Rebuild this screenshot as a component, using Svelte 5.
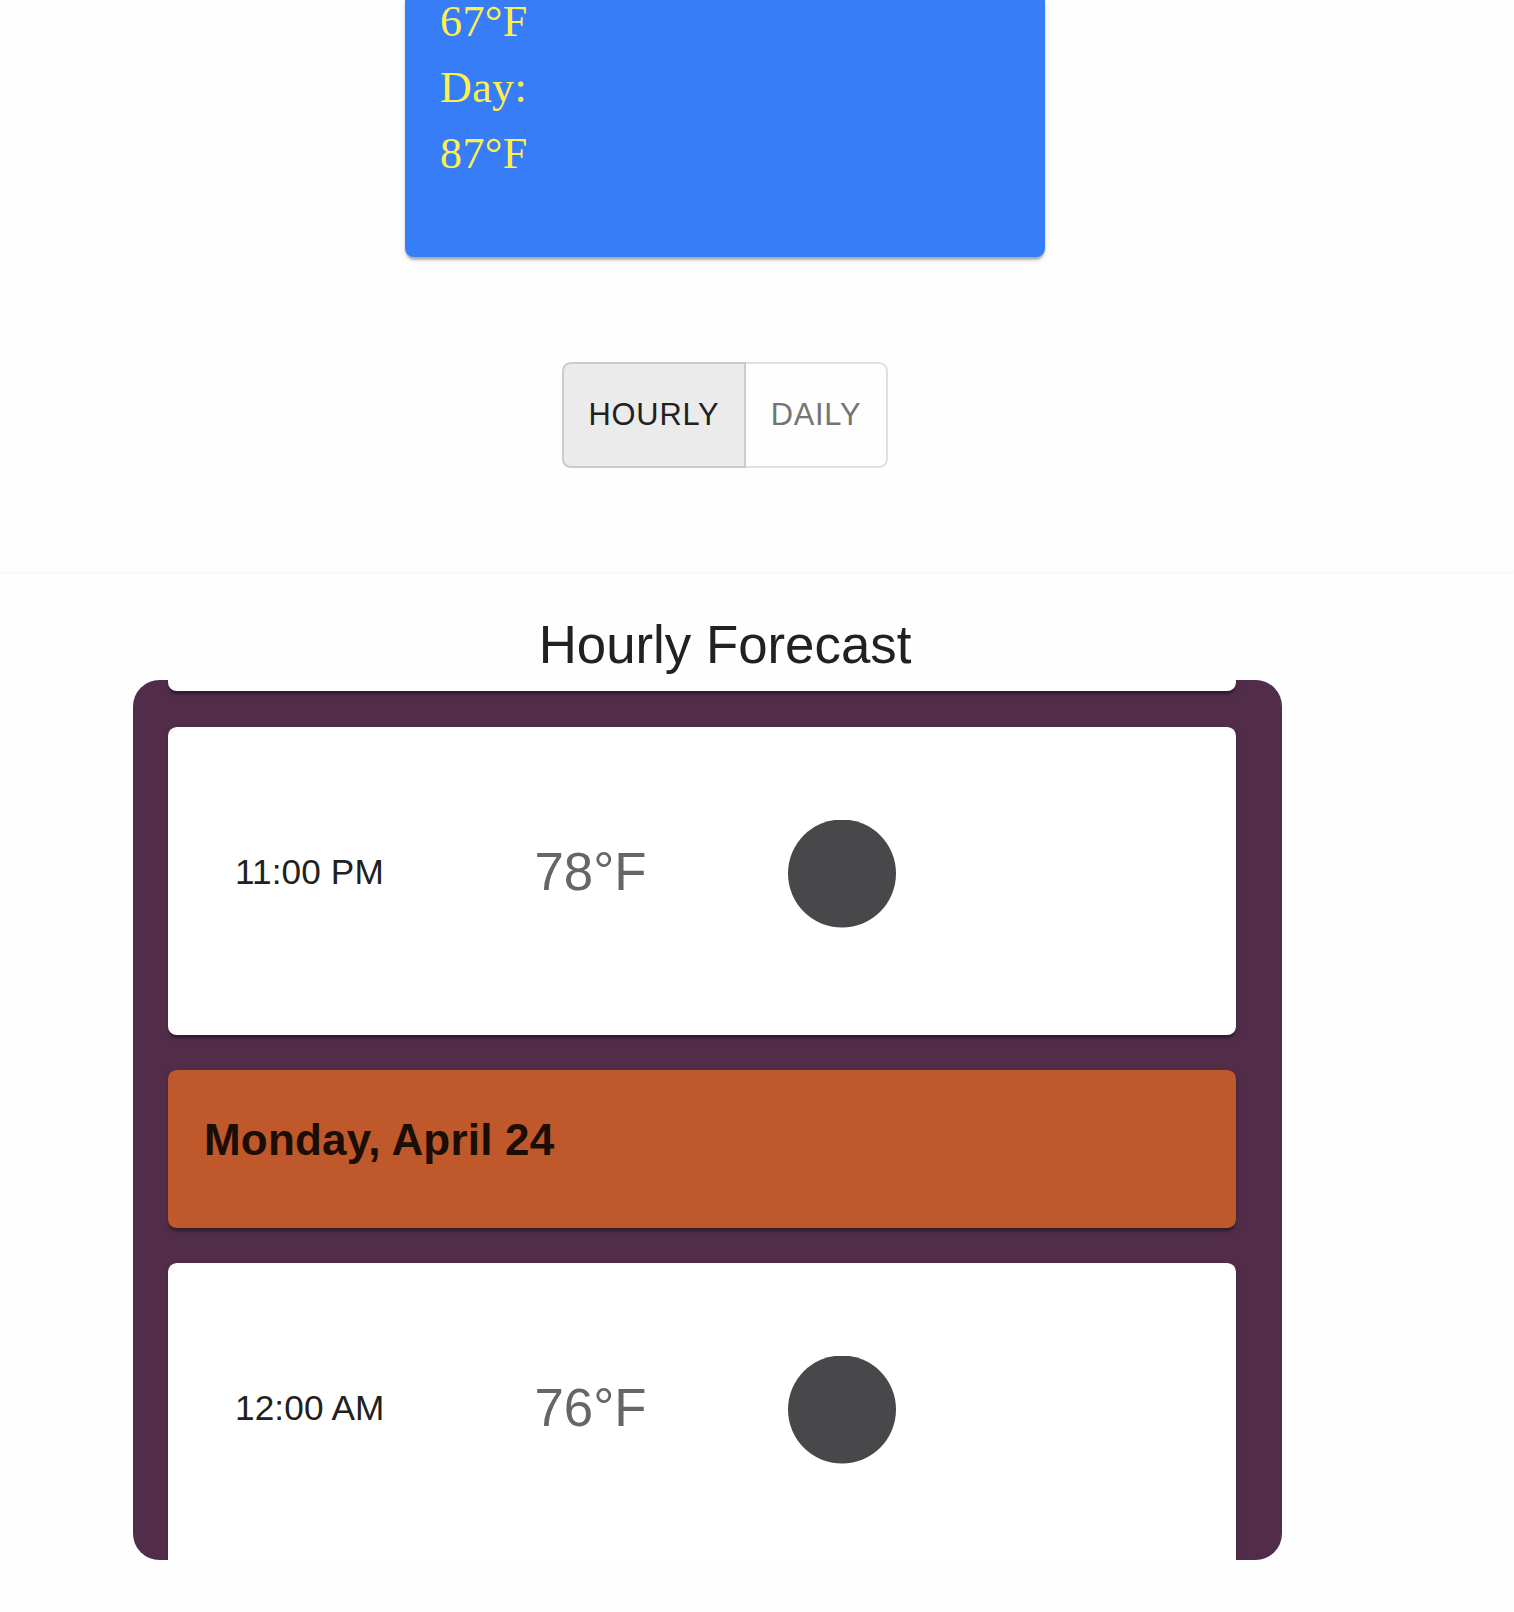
<script>
  const hours = [
    { time: '11:00 PM', temp: '78°F' },
    { time: '12:00 AM', temp: '76°F' }
  ];
</script>

{#snippet hourCard(hour)}
  <article class="card hour">
    <span class="time">{hour.time}</span>
    <span class="temp">{hour.temp}</span>
    <svg class="sky" viewBox="0 0 108 108" aria-hidden="true">
      <circle cx="54" cy="54" r="54" />
    </svg>
  </article>
{/snippet}

<main>
  <div class="column">
    <section class="current">
      <span>67°F</span>
      <span>Day:</span>
      <span>87°F</span>
    </section>
    <div class="toggle">
      <button class="selected">HOURLY</button>
      <button class="daily">DAILY</button>
    </div>
  </div>
  <hr />
  <div class="column">
    <h5>Hourly Forecast</h5>
    <section class="panel">
      <article class="card previous"></article>
      {@render hourCard(hours[0])}
      <article class="card date"><h6>Monday, April 24</h6></article>
      {@render hourCard(hours[1])}
    </section>
  </div>
</main>

<style>
  :global(body) {
    background: #fefefe;
  }
  main {
    height: 1612px;
    overflow: hidden;
    box-sizing: border-box;
    font-family: 'Liberation Sans', Arial, sans-serif;
    color: #212121;
  }
  .column {
    width: 1450px;
    display: flex;
    flex-direction: column;
    align-items: center;
  }
  .current {
    box-sizing: border-box;
    width: 640px;
    height: 257px;
    padding: 0 35px 70px;
    display: flex;
    flex-direction: column;
    justify-content: flex-end;
    border-radius: 0 0 8.8px 8.8px;
    background: #367df7;
    box-shadow: 0 4.4px 2.2px -2.2px rgba(0, 0, 0, 0.18), 0 2px 2.2px rgba(0, 0, 0, 0.12),
      0 2.2px 6.6px rgba(0, 0, 0, 0.1);
    font: 44px/66px 'Liberation Serif', 'Times New Roman', serif;
    letter-spacing: 0.41px;
    color: #fff04d;
  }
  .current span {
    flex: none;
  }
  .toggle {
    display: flex;
    box-sizing: border-box;
    height: 106px;
    margin-top: 105px;
  }
  button {
    box-sizing: border-box;
    margin: 0;
    padding: 0;
    font: 30.8px/54px 'Liberation Sans', Arial, sans-serif;
    letter-spacing: 0.8px;
    background: transparent;
    color: #757575;
    border: 2px solid #e0e0e0;
  }
  .selected {
    width: 184px;
    color: #212121;
    background: #ebebeb;
    border-color: #cbcbcb;
    border-right-width: 2px;
    border-radius: 8.8px 0 0 8.8px;
  }
  .daily {
    width: 142px;
    border-left: 0;
    border-radius: 0 8.8px 8.8px 0;
  }
  hr {
    margin: 103px 0 0;
    border: 0;
    height: 3px;
    background: linear-gradient(#fdfdfd, #f9f9f9);
  }
  h5 {
    margin: 35px 0 0;
    font-size: 52.8px;
    line-height: 71px;
    font-weight: 400;
  }
  .panel {
    align-self: flex-start;
    box-sizing: border-box;
    width: 1149px;
    height: 880px;
    margin-left: 133px;
    padding: 0 46px 0 35px;
    overflow: hidden;
    display: flex;
    flex-direction: column;
    gap: 35px;
    border-radius: 26.4px;
    background: #522d49;
  }
  .card {
    flex: none;
    box-sizing: border-box;
    border-radius: 8.8px;
    background: #fff;
    box-shadow: 0 4.4px 2.2px -2.2px rgba(0, 0, 0, 0.2), 0 2.2px 2.2px rgba(0, 0, 0, 0.14),
      0 2.2px 6.6px rgba(0, 0, 0, 0.12);
  }
  .previous {
    height: 308px;
    margin-top: -297px;
    margin-bottom: 1px;
  }
  .hour {
    height: 308px;
    display: grid;
    grid-template-columns: 300px 253px 108px;
    align-items: start;
    padding: 92px 67px 0;
  }
  .time {
    font-size: 35.2px;
    line-height: 53px;
    letter-spacing: 0.1px;
    padding-top: 25.5px;
  }
  .temp {
    font-size: 52.8px;
    line-height: 70px;
    color: #666;
    padding-top: 18px;
    margin-left: -0.5px;
  }
  .sky {
    width: 108px;
    height: 108px;
    fill: #48484a;
    padding-top: 0.5px;
  }
  .date {
    height: 158px;
    padding: 35px 36px;
    background: #bf582b;
  }
  h6 {
    margin: 0;
    font-size: 44px;
    line-height: 70px;
    font-weight: 700;
    letter-spacing: 0.2px;
    color: #1c0d05;
  }
</style>
